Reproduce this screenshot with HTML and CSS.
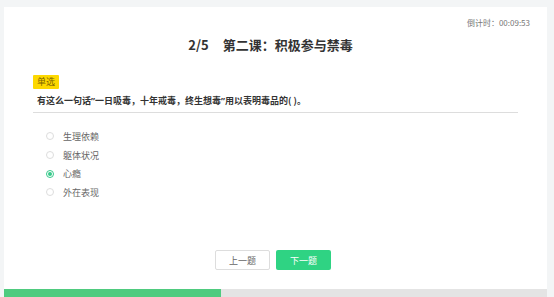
FILE: index.html
```html
<!DOCTYPE html>
<html lang="zh-CN">

<head>
  <meta charset="UTF-8">
  <meta name="viewport" content="width=device-width, initial-scale=1.0">
  <title>在线答题</title>
  <link rel="stylesheet" href="styles.css">
</head>

<body>

  <div class="card">
    <!-- 倒计时 -->
    <div class="timer">倒计时：00:09:53</div>

    <h1 class="title"><span class="num">2/5</span>第二课：积极参与禁毒</h1>

    <!-- 题目 -->
    <div class="question">
      <span class="badge">单选</span>
      <p class="stem">有这么一句话<span class="quote">”</span>一日吸毒，十年戒毒，终生想毒<span class="quote">”</span>用以表明毒品的( )。</p>
    </div>

    <ul class="options">
      <li class="option"><span class="radio"></span>生理依赖</li>
      <li class="option"><span class="radio"></span>躯体状况</li>
      <li class="option checked"><span class="radio"></span>心瘾</li>
      <li class="option"><span class="radio"></span>外在表现</li>
    </ul>

    <div class="actions">
      <button class="btn btn-prev">上一题</button>
      <button class="btn btn-next">下一题</button>
    </div>

    <div class="progress">
      <div class="progress-bar" style="width: 40%"></div>
    </div>
  </div>

</body>

</html>
```

FILE: styles.css
```css
body {
  margin: 0;
  padding: 0;
  background-color: #f3f5f6;
  font-family: "Noto Sans CJK SC", "Noto Sans", sans-serif;
  color: #333;
}

.card {
  margin: 7px 7px 0 4px;
  height: 290px;
  background-color: #fff;
  display: flex;
  flex-direction: column;
}

.timer {
  padding: 10px 17px 0 0;
  text-align: right;
  font-size: 8px;
  line-height: 12px;
  color: #777;
}

.title {
  margin: 7px 0 0;
  padding-right: 10px;
  text-align: center;
  font-size: 13px;
  line-height: 18px;
  font-weight: bold;
  color: #333;
}

.title .num {
  margin-right: 14px;
}

.question {
  margin: 12px 29px 0 29px;
  border-bottom: 1px solid #ddd;
  padding-bottom: 4px;
}

.badge {
  display: inline-block;
  padding: 0 4px;
  height: 14px;
  line-height: 14px;
  font-size: 9px;
  background-color: #fdd800;
  color: #7a6200;
  border-radius: 1px;
}

.stem {
  margin: 4px 0 0 4px;
  font-size: 9px;
  line-height: 14px;
  font-weight: bold;
  color: #333;
}

.stem .quote {
  font-family: "Noto Sans", sans-serif;
}

.options {
  list-style: none;
  margin: 14px 0 0 42px;
  padding: 0;
}

.option {
  display: flex;
  align-items: center;
  height: 18.7px;
  font-size: 9px;
  color: #666;
}

.radio {
  width: 6px;
  height: 6px;
  border: 1px solid #ddd;
  border-radius: 50%;
  margin-right: 9px;
  display: flex;
  align-items: center;
  justify-content: center;
}

.option.checked .radio {
  border-color: #36c98a;
}

.option.checked .radio::after {
  content: "";
  width: 4px;
  height: 4px;
  border-radius: 50%;
  background-color: #36c98a;
}

.actions {
  margin-top: auto;
  display: flex;
  justify-content: center;
  gap: 6px;
  padding-right: 5px;
}

.btn {
  width: 55px;
  height: 20px;
  font-family: inherit;
  font-size: 9px;
  border-radius: 2px;
  cursor: pointer;
  padding: 0;
}

.btn-prev {
  background-color: #fff;
  border: 1px solid #ddd;
  color: #666;
}

.btn-next {
  background-color: #2fd383;
  border: none;
  color: #fff;
}

.progress {
  margin-top: 19px;
  height: 8px;
  background-color: #e4e4e4;
  flex-shrink: 0;
}

.progress-bar {
  height: 100%;
  background-color: #4fcb7f;
}
```
